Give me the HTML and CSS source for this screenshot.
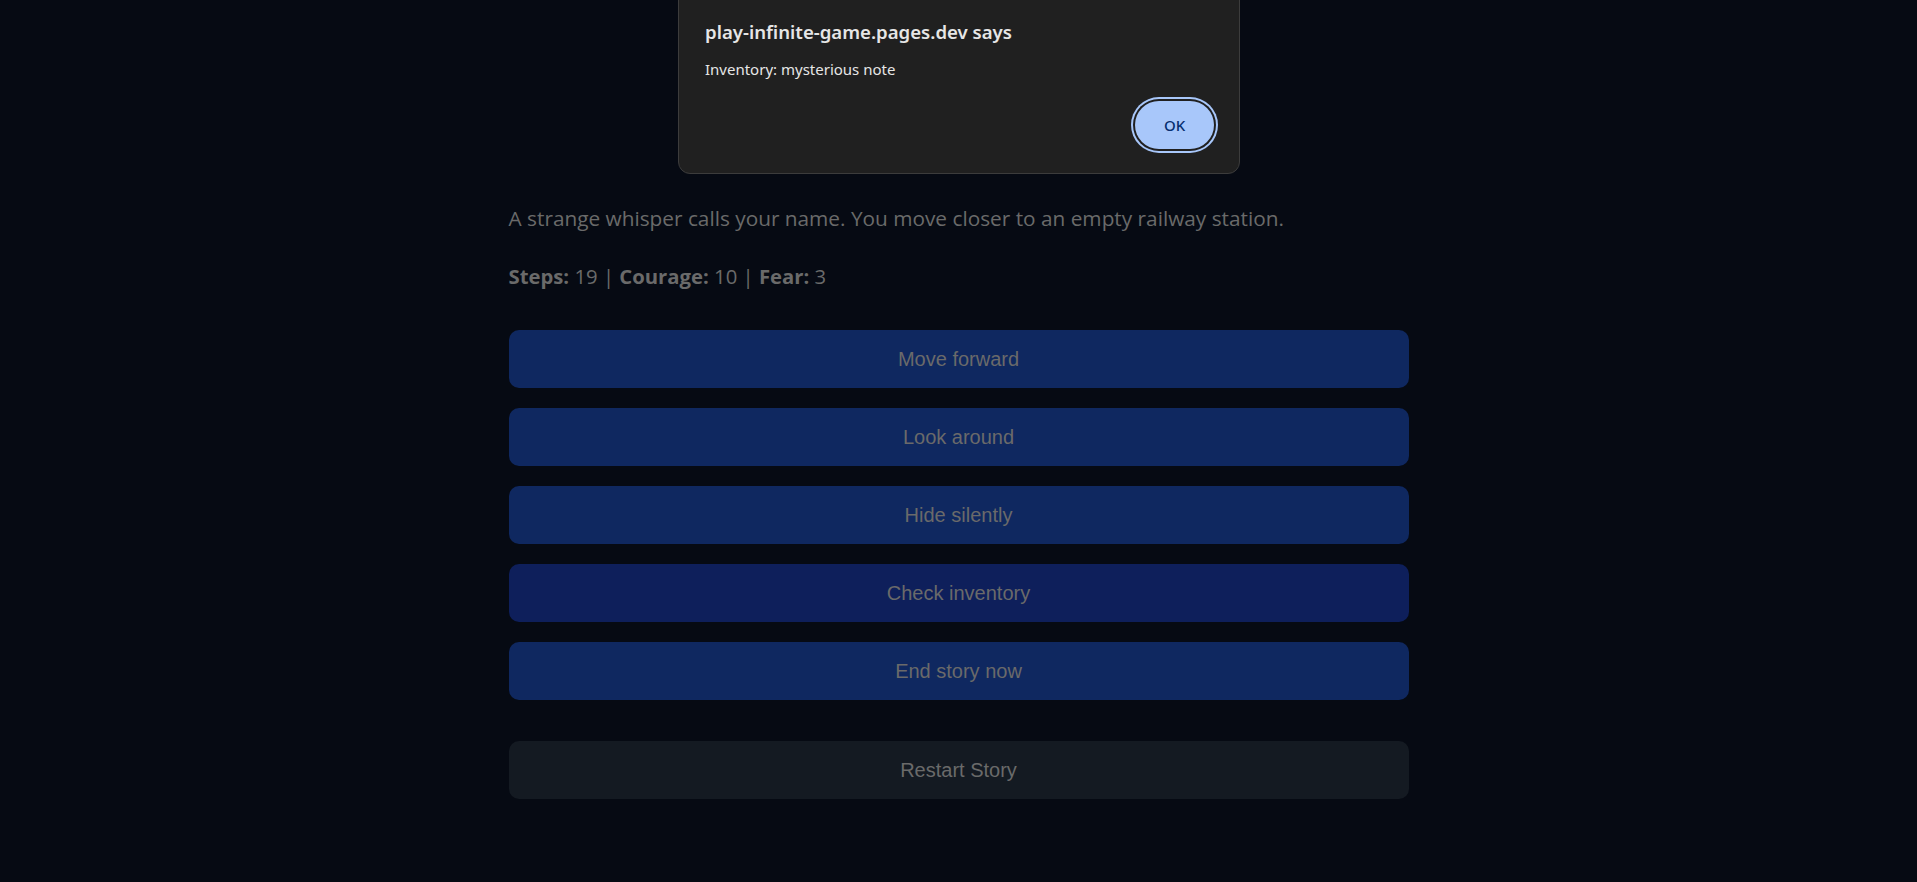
FILE: index.html
```html
<!DOCTYPE html>
<html lang="en">
<head>
    <meta charset="UTF-8">
    <meta name="viewport" content="width=device-width, initial-scale=1.0">
    <title>Infinite Story</title>
    <link rel="stylesheet" href="styles.css">
</head>
<body>

<!-- story area -->
<div class="game">
    <p class="story">A strange whisper calls your name. You move closer to an empty railway station.</p>
    <p class="stats"><b>Steps:</b> 19 | <b>Courage:</b> 10 | <b>Fear:</b> 3</p>

    <div class="choices">
        <button class="choice">Move forward</button>
        <button class="choice">Look around</button>
        <button class="choice">Hide silently</button>
        <button class="choice hover">Check inventory</button>
        <button class="choice">End story now</button>
    </div>

    <button class="restart">Restart Story</button>
</div>

<!-- alert dialog -->
<div class="alert">
    <div class="alert-title">play-infinite-game.pages.dev says</div>
    <div class="alert-msg">Inventory: mysterious note</div>
    <div class="alert-actions">
        <button class="alert-ok">OK</button>
    </div>
</div>

</body>
</html>
```

FILE: styles.css
```css
body {
    margin: 0;
    background-color: #060a13;
    font-family: "Open Sans", "Noto Sans", sans-serif;
    color: #6a6a6a;
}
.game {
    width: 900px;
    margin: 0 auto;
    padding-top: 202px;
}
.story {
    font-size: 20.8px;
    line-height: 32px;
    margin: 0 0 26px;
}
.stats {
    font-size: 20.3px;
    line-height: 32px;
    margin: 0 0 38px;
}
.stats b {
    font-weight: 700;
}
.choices {
    display: flex;
    flex-direction: column;
    gap: 20px;
}
.choice, .restart {
    height: 58px;
    border: none;
    border-radius: 10px;
    font-family: "Liberation Sans", Arial, sans-serif;
    font-size: 20px;
    color: #6a6a6a;
    cursor: pointer;
}
.choice {
    background-color: #0f2860;
}
.choice.hover {
    background-color: #0e1f5b;
}
.restart {
    width: 100%;
    margin-top: 41px;
    background-color: #141a22;
}
.alert {
    position: fixed;
    top: -20px;
    left: 678px;
    width: 562px;
    height: 194px;
    box-sizing: border-box;
    padding: 38px 24px 0 26px;
    background-color: #202020;
    border: 1px solid #3c3c3c;
    border-radius: 12px;
    font-family: "Noto Sans", "Open Sans", sans-serif;
    color: #e6e6e6;
}
.alert-title {
    font-size: 18.6px;
    font-weight: 600;
    line-height: 26px;
}
.alert-msg {
    font-size: 15px;
    line-height: 20px;
    margin-top: 14px;
}
.alert-actions {
    display: flex;
    justify-content: flex-end;
    margin-top: 22px;
}
.alert-ok {
    width: 79px;
    height: 48px;
    border: none;
    border-radius: 24px;
    background-color: #a8c7fa;
    color: #062e6f;
    font-family: "Noto Sans", sans-serif;
    font-size: 15px;
    font-weight: 500;
    box-shadow: 0 0 0 2px #202020, 0 0 0 4px #a8c7fa;
    margin-right: 1px;
}
```
